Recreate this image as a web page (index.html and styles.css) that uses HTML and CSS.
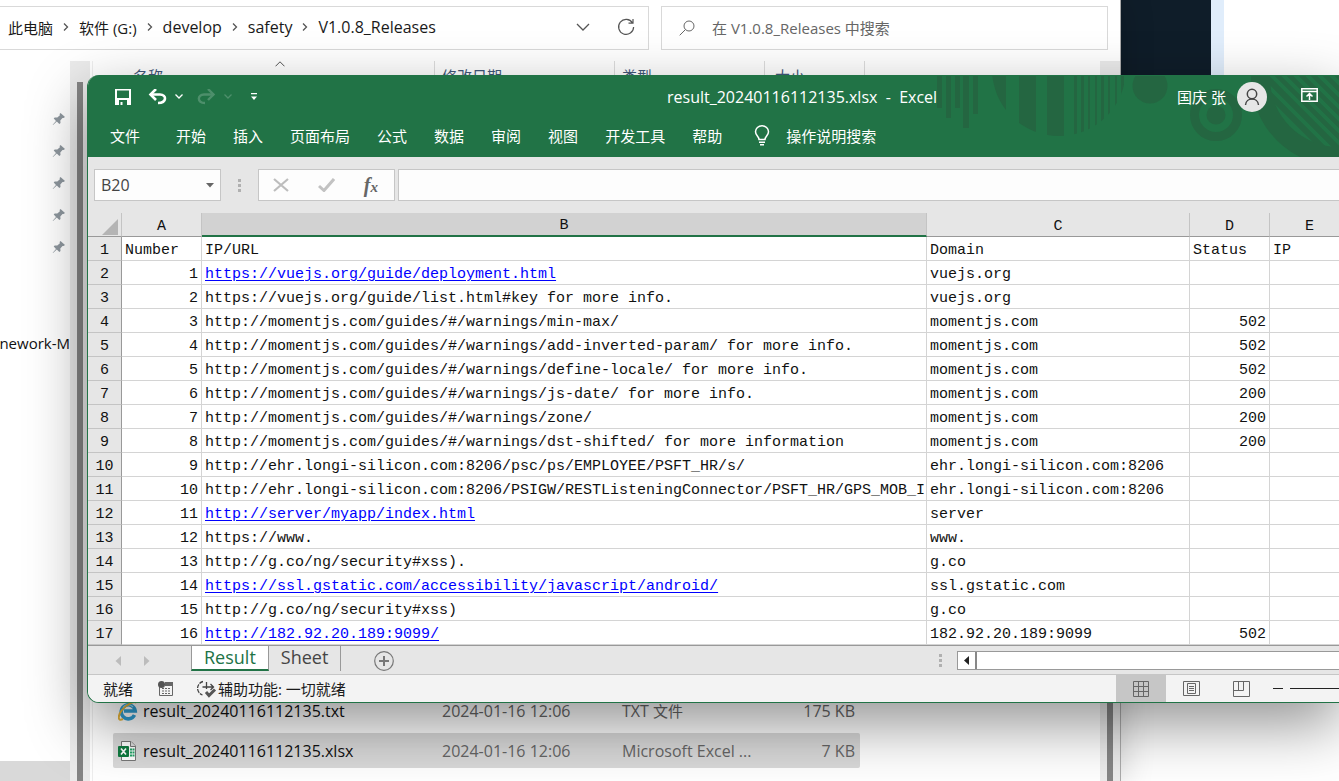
FILE: index.html
```html
<!DOCTYPE html>
<html lang="zh-CN">
<head>
<meta charset="utf-8">
<title>result_20240116112135.xlsx - Excel</title>
<link rel="stylesheet" href="styles.css">
</head>
<body>
<svg width="0" height="0" class="defs" aria-hidden="true">
  <symbol id="pin" viewBox="0 0 14 14"><path d="M8.500 1 L13 5 L11.500 6 L10.500 5.900 L8.300 8.400 L8.500 11 L7.300 12 L4.800 9.600 L1 13 L.7 12.700 L4 8.900 L1.700 6.500 L2.700 5.400 L5.300 5.500 L7.900 3.300 L7.600 2Z" fill="#8e979e"/></symbol>
  <symbol id="chev" viewBox="0 0 8 10"><path d="M2 1.500 L5.500 5 L2 8.500" fill="none" stroke="#555" stroke-width="1.300"/></symbol>
</svg>
<div class="desktop">
  <section class="explorer">
    <div class="topbar">
      <nav class="address">
        <a href="#" class="cn">此电脑</a><svg width="8" height="10"><use href="#chev"/></svg>
        <a href="#" class="cn">软件 (G:)</a><svg width="8" height="10"><use href="#chev"/></svg>
        <a href="#">develop</a><svg width="8" height="10"><use href="#chev"/></svg>
        <a href="#">safety</a><svg width="8" height="10"><use href="#chev"/></svg>
        <a href="#">V1.0.8_Releases</a>
        <button class="history" aria-label="历史记录"><svg width="14" height="8" viewBox="0 0 14 8"><path d="M1 1 L7 7 L13 1" fill="none" stroke="#555" stroke-width="1.300"/></svg></button>
        <button aria-label="刷新"><svg width="18" height="18" viewBox="0 0 18 18"><path d="M15.500 5 A7.500 7.500 0 1 0 16.600 9 M16 1 V5.200 H11.500" fill="none" stroke="#555" stroke-width="1.200"/></svg></button>
      </nav>
      <label class="find">
        <svg width="16" height="16" viewBox="0 0 16 16"><circle cx="10" cy="6" r="5" fill="none" stroke="#666"/><path d="M6.500 9.500 L.7 15.300" stroke="#666"/></svg>
        <input type="text" aria-label="搜索" placeholder="在 V1.0.8_Releases 中搜索">
      </label>
    </div>
    <div class="exbody">
      <aside class="tree">
        <div class="pins">
          <svg width="14" height="14"><use href="#pin"/></svg>
          <svg width="14" height="14"><use href="#pin"/></svg>
          <svg width="14" height="14"><use href="#pin"/></svg>
          <svg width="14" height="14"><use href="#pin"/></svg>
          <svg width="14" height="14"><use href="#pin"/></svg>
        </div>
        <span class="folder">nework-M</span>
        <div class="treesel"></div>
      </aside>
      <div class="gutter"><div class="thumb"></div></div>
      <div class="files">
        <div class="fhead">
          <span class="sorted">名称<svg width="10" height="6" viewBox="0 0 10 6"><path d="M.5 5.300 L5 .8 L9.500 5.300" fill="none" stroke="#555"/></svg></span><span>修改日期</span><span>类型</span><span>大小</span>
        </div>
        <div class="flist">
          <div class="frow">
            <svg width="20" height="20" viewBox="0 0 20 20"><path d="M16.500 14 A7 7 0 1 1 17.200 10 H6" fill="none" stroke="#2f9fd4" stroke-width="3.600"/><path d="M5 7 A6 6 0 0 1 15 6" fill="none" stroke="#9adcf4" stroke-width="1.200"/><path d="M5 18 C-1 21 0 14 4 9 C9 3 17 -1 18.500 2" fill="none" stroke="#e8b53a" stroke-width="2"/></svg>
            <span>result_20240116112135.txt</span><span class="meta">2024-01-16 12:06</span><span class="meta">TXT <span class="cn">文件</span></span><span class="meta size">175 KB</span>
          </div>
          <div class="frow chosen">
            <svg width="20" height="20" viewBox="0 0 20 20"><path d="M3.500 .5 H13 L17.500 5 V19.500 H3.500Z" fill="#fff" stroke="#777"/><path d="M12.500 .5 V5.500 H17.500" fill="#ddd" stroke="#777"/><path d="M12 8.500 h4.500 M12 11.500 h4.500 M12 14.500 h4.500" stroke="#21a366" stroke-width="2" stroke-dasharray="2 .500"/><rect x="0" y="5" width="11" height="11" rx="1" fill="#107c41"/><path d="M3 7.500 L8 13.500 M8 7.500 L3 13.500" stroke="#fff" stroke-width="1.700"/></svg>
            <span>result_20240116112135.xlsx</span><span class="meta">2024-01-16 12:06</span><span class="meta">Microsoft Excel ...</span><span class="meta size">7 KB</span>
          </div>
        </div>
      </div>
      <div class="gutter right"><div class="thumb"></div></div>
    </div>
  </section>
  <div class="behind"><div class="dark"></div><div class="blue"></div></div>

  <section class="excel">
    <header class="ribbon">
      <svg class="art" width="449" height="82" viewBox="0 0 449 82" aria-hidden="true">
        <defs>
          <clipPath id="disc"><circle cx="169" cy="-6" r="67"/></clipPath>
          <clipPath id="inner"><circle cx="449" cy="3" r="69"/></clipPath>
          <clipPath id="top"><rect y="1" width="449" height="81"/></clipPath>
        </defs>
        <g fill="#246641" clip-path="url(#top)">
          <path d="M47 0h5v33h-5z M56 0h5v43h-5z M65 0h5v33h-5z M73 0h6v53h-6z M83 0h5v39h-5z"/>
          <path clip-path="url(#disc)" d="M100 0h16v70h-16z M129 0h17v70h-17z M157 0h17v70h-17z M184 0h3v70h-3z M191 0h3v70h-3z M198 0h2v70h-2z M205 0h2v70h-2z M211 0h3v70h-3z M218 0h2v70h-2z M225 0h2v70h-2z M231 0h3v70h-3z"/>
          <circle cx="260" cy="11" r="17.500"/>
          <circle cx="326" cy="40" r="21.500" fill="none" stroke="#246641" stroke-width="9"/>
          <circle cx="326" cy="40" r="9.500"/>
          <circle cx="449" cy="3" r="88"/>
          <g clip-path="url(#inner)" stroke="#217346" stroke-width="4">
            <path d="M367 0 L457 90 M381 0 L471 90 M393 0 L483 90 M405 0 L495 90 M417 0 L507 90 M429 0 L519 90 M441 0 L531 90"/>
            <path d="M348 0 L446 98" stroke-width="11"/>
          </g>
        </g>
      </svg>
      <div class="titlebar">
        <div class="quick">
          <button aria-label="保存"><svg width="16" height="16" viewBox="0 0 16 16"><path d="M0 0h16v16H0z M2 1.500v7.500h12V1.500z M4 11v5h1.500v-3h2v3H12v-5z" fill="#fff" fill-rule="evenodd"/></svg></button>
          <button aria-label="撤销" class="undo"><svg width="19" height="16" viewBox="0 0 19 16"><path d="M2 5.500 H12 C19 5.500 19 14 10 14" fill="none" stroke="#fff" stroke-width="2.600"/><path d="M8 0 L2.500 5.500 L8 11" fill="none" stroke="#fff" stroke-width="2.600"/></svg><svg width="8" height="5" viewBox="0 0 8 5"><path d="M.5 .5 L4 4 L7.500 .5" fill="none" stroke="#fff" stroke-width="1.300"/></svg></button>
          <button aria-label="恢复" class="redo"><svg width="19" height="16" viewBox="0 0 19 16"><path d="M17 5.500 H7 C0 5.500 0 14 8 14" fill="none" stroke="#4d8f6b" stroke-width="2.400"/><path d="M11 0 L16.500 5.500 L11 11" fill="none" stroke="#4d8f6b" stroke-width="2.400"/></svg><svg width="8" height="5" viewBox="0 0 8 5"><path d="M.5 .5 L4 4 L7.500 .5" fill="none" stroke="#4d8f6b" stroke-width="1.300"/></svg></button>
          <button aria-label="自定义" class="more"><svg width="6" height="7" viewBox="0 0 6 7"><path d="M0 .7H6" stroke="#fff" stroke-width="1.300"/><path d="M0 3.500H6L3 7Z" fill="#fff"/></svg></button>
        </div>
        <h1>result_20240116112135.xlsx&nbsp; -&nbsp; Excel</h1>
        <div class="user">
          <span class="cn">国庆 张</span>
          <svg width="30" height="30" viewBox="0 0 30 30"><circle cx="15" cy="15" r="15" fill="#e6e6e6"/><circle cx="15" cy="12" r="4.700" fill="none" stroke="#444" stroke-width="1.500"/><path d="M8.500 23 C9 15 21 15 21.500 23" fill="none" stroke="#444" stroke-width="1.500"/></svg>
          <button aria-label="功能区显示选项"><svg width="17" height="14" viewBox="0 0 17 14"><path d="M.8 .8h15.400v12.400H.8z M.8 3.500h15.400 M8.500 12V6 M5.500 8.500L8.500 5.500L11.500 8.500" fill="none" stroke="#fff" stroke-width="1.500"/></svg></button>
        </div>
      </div>
      <nav class="tabs">
        <button class="file">文件</button><button>开始</button><button>插入</button><button>页面布局</button><button>公式</button><button>数据</button><button>审阅</button><button>视图</button><button>开发工具</button><button>帮助</button>
        <button class="tell"><svg width="16" height="21" viewBox="0 0 16 21"><path d="M5 14.500 C5 11.500 1.500 10.500 1.500 6.800 A6.500 6 0 0 1 14.500 6.800 C14.500 10.500 11 11.500 11 14.500Z M5 17.200h6 M6 19.800h4" fill="none" stroke="#fff" stroke-width="1.500"/></svg>操作说明搜索</button>
      </nav>
    </header>

    <div class="formula">
      <label class="namebox"><input type="text" value="B20" aria-label="名称框"><svg width="8" height="5" viewBox="0 0 8 5"><path d="M0 0H8L4 4.500Z" fill="#666"/></svg></label>
      <span class="dots"><i></i><i></i><i></i></span>
      <div class="fxbox">
        <button aria-label="取消"><svg width="16" height="14" viewBox="0 0 16 14"><path d="M1 1 L15 13 M15 1 L1 13" stroke="#bdbdbd" stroke-width="2.200"/></svg></button>
        <button aria-label="输入"><svg width="17" height="14" viewBox="0 0 17 14"><path d="M1 8 L6 12.500 L16 1" fill="none" stroke="#c2c2c2" stroke-width="3"/></svg></button>
        <button aria-label="插入函数" class="fx">f<span>x</span></button>
      </div>
      <input class="entry" type="text" aria-label="编辑栏">
    </div>

    <div class="sheet">
      <table>
        <colgroup><col class="c0"><col class="c1"><col class="c2"><col class="c3"><col class="c4"><col class="c4"></colgroup>
        <thead><tr><th class="corner"><svg width="16" height="16" viewBox="0 0 16 16"><path d="M16 0V16H0Z" fill="#b4b4b4"/></svg></th><th>A</th><th class="sel">B</th><th>C</th><th>D</th><th>E</th></tr></thead>
        <tbody>
        <tr><th>1</th><td class="t">Number</td><td>IP/URL</td><td>Domain</td><td class="t">Status</td><td>IP</td></tr>
        <tr><th>2</th><td>1</td><td><a href="#">https://vuejs.org/guide/deployment.html</a></td><td>vuejs.org</td><td></td><td></td></tr>
        <tr><th>3</th><td>2</td><td>https://vuejs.org/guide/list.html#key for more info.</td><td>vuejs.org</td><td></td><td></td></tr>
        <tr><th>4</th><td>3</td><td>http://momentjs.com/guides/#/warnings/min-max/</td><td>momentjs.com</td><td>502</td><td></td></tr>
        <tr><th>5</th><td>4</td><td>http://momentjs.com/guides/#/warnings/add-inverted-param/ for more info.</td><td>momentjs.com</td><td>502</td><td></td></tr>
        <tr><th>6</th><td>5</td><td>http://momentjs.com/guides/#/warnings/define-locale/ for more info.</td><td>momentjs.com</td><td>502</td><td></td></tr>
        <tr><th>7</th><td>6</td><td>http://momentjs.com/guides/#/warnings/js-date/ for more info.</td><td>momentjs.com</td><td>200</td><td></td></tr>
        <tr><th>8</th><td>7</td><td>http://momentjs.com/guides/#/warnings/zone/</td><td>momentjs.com</td><td>200</td><td></td></tr>
        <tr><th>9</th><td>8</td><td>http://momentjs.com/guides/#/warnings/dst-shifted/ for more information</td><td>momentjs.com</td><td>200</td><td></td></tr>
        <tr><th>10</th><td>9</td><td>http://ehr.longi-silicon.com:8206/psc/ps/EMPLOYEE/PSFT_HR/s/</td><td>ehr.longi-silicon.com:8206</td><td></td><td></td></tr>
        <tr><th>11</th><td>10</td><td>http://ehr.longi-silicon.com:8206/PSIGW/RESTListeningConnector/PSFT_HR/GPS_MOB_I</td><td>ehr.longi-silicon.com:8206</td><td></td><td></td></tr>
        <tr><th>12</th><td>11</td><td><a href="#">http://server/myapp/index.html</a></td><td>server</td><td></td><td></td></tr>
        <tr><th>13</th><td>12</td><td>https://www.</td><td>www.</td><td></td><td></td></tr>
        <tr><th>14</th><td>13</td><td>http://g.co/ng/security#xss).</td><td>g.co</td><td></td><td></td></tr>
        <tr><th>15</th><td>14</td><td><a href="#">https://ssl.gstatic.com/accessibility/javascript/android/</a></td><td>ssl.gstatic.com</td><td></td><td></td></tr>
        <tr><th>16</th><td>15</td><td>http://g.co/ng/security#xss)</td><td>g.co</td><td></td><td></td></tr>
        <tr><th>17</th><td>16</td><td><a href="#">http://182.92.20.189:9099/</a></td><td>182.92.20.189:9099</td><td>502</td><td></td></tr>
        </tbody>
      </table>
    </div>

    <div class="sheetbar">
      <button class="arrow" aria-label="上一个"><svg width="6" height="10" viewBox="0 0 6 10"><path d="M6 0V10L.5 5Z" fill="#bcbcbc"/></svg></button>
      <button class="arrow" aria-label="下一个"><svg width="6" height="10" viewBox="0 0 6 10"><path d="M0 0V10L5.500 5Z" fill="#bcbcbc"/></svg></button>
      <button class="stab on">Result</button><button class="stab">Sheet</button>
      <button class="add" aria-label="新工作表"><svg width="20" height="20" viewBox="0 0 20 20"><circle cx="10" cy="10" r="9.300" fill="none" stroke="#777" stroke-width="1.200"/><path d="M10 5V15M5 10H15" stroke="#777" stroke-width="2"/></svg></button>
      <span class="dots"><i></i><i></i><i></i></span>
      <div class="hscroll"><button aria-label="向左滚动"><svg width="5" height="9" viewBox="0 0 5 9"><path d="M5 0V9L0 4.500Z" fill="#222"/></svg></button><div class="track"></div></div>
    </div>

    <footer class="status">
      <span class="ready">就绪</span>
      <svg class="macro" width="15" height="15" viewBox="0 0 15 15"><path d="M1.500 6V14.500H14.500V1.500H7" fill="none" stroke="#666" /><path d="M7 1h8v4H7z" fill="#666"/><circle cx="3.500" cy="3.500" r="3.500" fill="#555"/><path d="M4 7.500h9 M4 10h9 M4 12.500h9" stroke="#666" stroke-dasharray="2 1"/></svg>
      <svg width="20" height="18" viewBox="0 0 20 18"><path d="M6 1.500 A7 7 0 0 0 5.500 15" fill="none" stroke="#444" stroke-width="1.300" stroke-dasharray="4 1"/><path d="M5.500 7H16 M9.500 2V9 M13.500 4L16.500 7L13.500 10" fill="none" stroke="#444" stroke-width="1.300"/><path d="M9 12L12 15.500L18 9.500" fill="none" stroke="#555" stroke-width="3"/></svg>
      <button class="acc">辅助功能: 一切就绪</button>
      <div class="views">
        <button class="on" aria-label="普通"><svg width="16" height="16" viewBox="0 0 16 16"><path d="M.5 .5h15v15H.5z M.5 5.500h15 M.5 10.500h15 M5.500 .5v15 M10.500 .5v15" fill="none" stroke="#666"/></svg></button>
        <button aria-label="页面布局"><svg width="17" height="15" viewBox="0 0 17 15"><path d="M.5 .5h16v14H.5z M4.500 2.500h8v10h-8z M6 5.500h5 M6 7.500h5 M6 9.500h5" fill="none" stroke="#666"/></svg></button>
        <button aria-label="分页预览"><svg width="17" height="16" viewBox="0 0 17 16"><path d="M.5 .5h16v15H.5z M.5 9.500h10V.5 M5.500 .5v9" fill="none" stroke="#666"/></svg></button>
        <button class="minus" aria-label="缩小"><svg width="10" height="2" viewBox="0 0 10 2"><path d="M0 .5H10" stroke="#222"/></svg></button>
        <input type="range" aria-label="缩放">
      </div>
    </footer>
  </section>
</div>
</body>
</html>
```
FILE: styles.css
```css
* { box-sizing: border-box; }
body { margin: 0; background: #fff; }
body, button, input { font-family: "Open Sans", "Noto Sans CJK SC", sans-serif; font-size: 15px; color: #1a1a1a; }
button { border: 0; padding: 0; background: none; display: flex; align-items: center; }
input { border: 0; outline: 0; background: none; min-width: 0; padding: 0; }
a { color: inherit; text-decoration: none; }
svg { display: block; flex: none; }
.defs { position: absolute; }
.cn { font-size: 15px; }
.desktop { position: relative; height: 100vh; display: flex; overflow: hidden; }

/* file explorer */
.explorer { flex: 1; min-width: 0; display: flex; flex-direction: column; background: #fff; box-shadow: 0 0 32px rgba(0,0,0,.2); z-index: 1; border-right: 1px solid #aaa; }
.topbar { display: flex; gap: 12px; padding: 6px 12px 0 0; }
.address { flex: 0 0 649px; height: 44px; display: flex; align-items: center; border: 1px solid #d9d9d9; border-left: 0; padding: 0 13px 2px 8px; gap: 9px; white-space: nowrap; font-size: 16px; }
.address .history { margin-left: auto; margin-right: 18px; }
.find { flex: 1; display: flex; align-items: center; gap: 17px; border: 1px solid #d9d9d9; padding: 0 17px; }
.find input { flex: 1; font-size: 15px; }
.find input::placeholder { color: #666; opacity: 1; }
.exbody { flex: 1; min-height: 0; display: flex; margin-top: 11px; }
.tree { width: 70px; display: flex; flex-direction: column; align-items: flex-end; overflow: hidden; }
.pins { display: flex; flex-direction: column; gap: 18px; padding: 51px 4px 0 0; }
.folder { margin-top: 79px; color: #111; white-space: nowrap; }
.treesel { width: 100%; height: 20px; margin-top: auto; background: #d9d9d9; }
.gutter { width: 20px; background: #ebebeb; padding: 21px 7px 0; display: flex; }
.thumb { flex: 1; background: #858585; }
.files { flex: 1; min-width: 0; display: flex; flex-direction: column; justify-content: space-between; margin-left: 2px; border-left: 1px solid #eee; }
.fhead { display: flex; color: #41587a; }
.fhead span { width: 180px; height: 32px; line-height: 30px; padding-left: 7px; border-right: 1px solid #ddd; }
.fhead .sorted { width: 342px; padding-left: 40px; position: relative; }
.sorted svg { position: absolute; left: 182px; top: 0; }
.fhead span:nth-child(3) { width: 150px; }
.fhead span:nth-child(4) { width: 100px; padding-left: 10px; }
.flist { display: flex; flex-direction: column; gap: 5px; padding: 0 0 13px 20px; }
.frow { width: 747px; height: 35px; display: grid; grid-template-columns: 20px 304px 180px 150px 83px; align-items: center; padding-left: 5px; font-size: 16px; color: #111; }
.frow > span:nth-child(2) { padding-left: 5px; }
.frow .meta { color: #666; }
.frow .size { text-align: right; }
.chosen { background: #d9d9d9; border-radius: 2px; }
.behind { width: 218px; display: flex; height: 300px; }
.dark { width: 90px; background: #0f1d29; }
.blue { width: 13px; background: #e0edfb; }

/* workbook window */
.excel { position: absolute; z-index: 2; left: 87px; right: -1px; top: 75px; border: 1px solid #217346; border-top: 0; border-radius: 12px 0 0 12px; overflow: hidden; background: #e6e6e6; }
.excel { box-shadow: 0 22px 60px rgba(0,0,0,.42); }
.ribbon { position: relative; background: #217346; color: #fff; height: 82px; }
.ribbon button { color: #fff; }
.art { position: absolute; right: 0; top: 0; }
.titlebar { position: relative; display: flex; align-items: center; height: 43px; }
.quick { flex: 0 0 579px; display: flex; align-items: center; padding-left: 27px; }
.undo, .redo { gap: 8px; }
.undo { margin-left: 17px; }
.redo { margin-left: 14px; }
.more { margin-left: 19px; }
h1 { margin: 0; font-size: 16px; font-weight: 400; white-space: nowrap; }
.user { margin-left: auto; padding-right: 21px; display: flex; align-items: center; }
.user svg { margin-left: 11px; }
.user button svg { margin-left: 34px; margin-bottom: 3px; }
.tabs { position: relative; display: flex; gap: 27px; padding-left: 22px; height: 35px; }
.file { margin-right: 9px; }
.tell { margin-left: 5px; gap: 16px; }
.formula { display: flex; height: 56px; padding: 12px 0 12px 6px; }
.namebox, .fxbox, .entry { background: #fdfdfd; border: 1px solid #c6c6c6; }
.namebox { width: 127px; display: flex; align-items: center; padding: 0 6px; }
.namebox input { flex: 1; color: #444; font-size: 16px; }
.dots { width: 3px; display: flex; flex-direction: column; justify-content: center; gap: 2px; margin: 0 17px; }
.dots i { height: 3px; background: #b0b0b0; }
.fxbox { width: 137px; display: flex; align-items: center; justify-content: space-between; padding: 0 16px 0 14px; }
.fx { font: italic bold 20px "Liberation Serif", serif; color: #666; align-items: baseline; }
.fx span { font-size: 15px; }
.entry { flex: 1; margin-left: 3px; border-right: 0; }

.sheet { overflow: hidden; background: #fff; border-bottom: 1px solid #999; }
table { table-layout: fixed; width: 1262px; border-spacing: 0; font: 15px/19px "Liberation Mono", "Noto Sans CJK SC", monospace; color: #111; }
.c0 { width: 34px; } .c1 { width: 80px; } .c2 { width: 725px; } .c3 { width: 263px; } .c4 { width: 80px; }
td, th { height: 24px; padding: 4px 3px 0; overflow: hidden; white-space: nowrap; border-right: 1px solid #d4d4d4; border-bottom: 1px solid #d4d4d4; }
td:nth-child(3) { padding-right: 0; }
th { background: #e6e6e6; font-weight: 400; border-color: #c4c4c4; text-align: center; }
tbody th { border-right-color: #999; }
thead th { border-bottom-color: #999; line-height: 18px; }
thead .sel { background: #d2d2d2; border-bottom: 2px solid #217346; }
.corner svg { margin-left: auto; }
td:nth-child(2), td:nth-child(5) { text-align: right; }
td.t { text-align: left; }
td a { color: #00f; text-decoration: underline; text-underline-offset: 2px; text-decoration-thickness: 1px; }

.sheetbar { display: flex; align-items: flex-start; height: 29px; border-bottom: 1px solid #c6c6c6; }
.arrow { height: 29px; margin-left: 27px; }
.arrow + .arrow { margin-left: 23px; margin-right: 41px; }
.stab { font-size: 18px; height: 25px; padding: 0 12px; line-height: 22px; color: #444; align-items: flex-start; }
.stab.on { background: #fff; color: #217346; border: solid #999; border-width: 0 1px 2px; border-bottom-color: #217346; }
.stab:not(.on) { border-right: 1px solid #999; }
.add { height: 29px; margin-left: 33px; }
.sheetbar .dots { margin: 8px 15px 0 auto; }
.hscroll { flex: 0 0 382px; display: flex; height: 19px; margin-top: 5px; border: 1px solid #999; border-right: 0; background: #fff; }
.hscroll button { width: 19px; justify-content: center; border-right: 2px solid #888; }
.track { flex: 1; }
.status { display: flex; align-items: center; height: 27px; padding-left: 15px; background: #f3f3f3; }
.macro { margin: 0 24px 0 25px; }
.acc { height: 24px; margin-left: 1px; }
.views { margin-left: auto; display: flex; height: 27px; align-items: center; }
.views button { width: 50px; height: 27px; justify-content: center; }
.views .on { background: #c6c6c6; }
.views .minus { width: 24px; }
input[type=range] { appearance: none; width: 49px; height: 1px; margin: 0; background: #222; }
input[type=range]::-webkit-slider-thumb { appearance: none; width: 1px; height: 1px; }
```
